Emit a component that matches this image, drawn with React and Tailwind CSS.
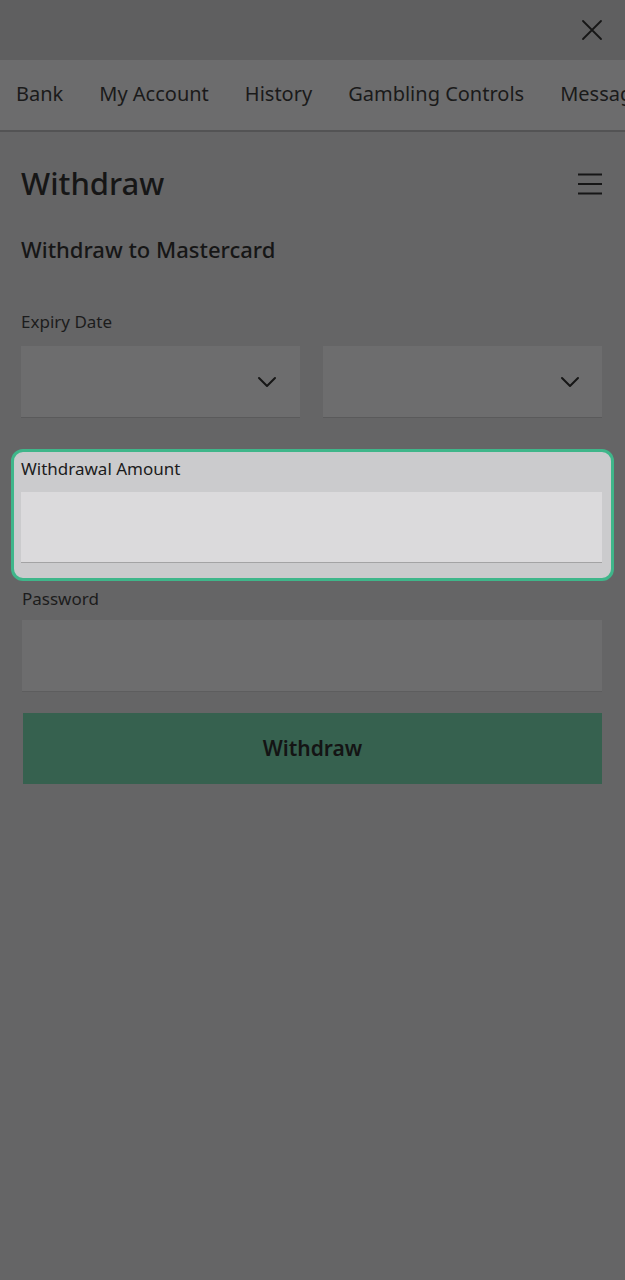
import React from "react";

const font = { fontFamily: "'Noto Sans', Roboto, 'Liberation Sans', sans-serif" };

function Chevron() {
  return (
    <svg width="20" height="12" viewBox="0 0 20 12" fill="none">
      <path d="M2 2 L10 10 L18 2" stroke="#161616" strokeWidth="2" strokeLinecap="round" strokeLinejoin="round" />
    </svg>
  );
}

export default function App() {
  const tabs = ["Bank", "My Account", "History", "Gambling Controls", "Messages"];
  return (
    <div className="w-[625px] h-[1280px] overflow-hidden bg-[#656566] text-[#161616]" style={font}>
      {/* top bar */}
      <div className="h-[60px] bg-[#5f5f60] flex items-center justify-end pr-[22px]">
        <svg width="22" height="22" viewBox="0 0 22 22" fill="none">
          <path d="M2 2 L20 20 M20 2 L2 20" stroke="#161616" strokeWidth="1.8" strokeLinecap="round" />
        </svg>
      </div>
      {/* tabs */}
      <div className="relative h-[72px] bg-[#6c6c6d] border-b-2 border-[#535354] flex items-center gap-[36px] pl-[16px] whitespace-nowrap overflow-hidden">
        {tabs.map((t) => (
          <span key={t} className="text-[20px] leading-none text-[#1a1a1a] shrink-0 -mt-[2px]">{t}</span>
        ))}
        <div className="absolute left-[10px] bottom-[-2px] w-[52px] h-[2px] bg-[#4f6a66]" />
      </div>
      {/* content */}
      <div className="pl-[21px] pr-[23px]">
        <div className="flex items-center justify-between h-[50px] mt-[27px]">
          <h1 className="text-[31px] font-medium leading-none -mt-[2px]">Withdraw</h1>
          <svg width="26" height="22" viewBox="0 0 26 22" fill="none" className="-mr-[1px]">
            <path d="M1 1.5 H25 M1 11 H25 M1 20.5 H25" stroke="#161616" strokeWidth="2" />
          </svg>
        </div>
        <h2 className="mt-[26px] text-[22px] font-medium leading-[28px]">Withdraw to Mastercard</h2>
        <div className="mt-[49px] text-[17px] leading-[20px] text-[#1c1c1c]">Expiry Date</div>
        <div className="mt-[14px] grid grid-cols-2 gap-[23px]">
          <div className="h-[72px] bg-[#6d6d6e] border-b border-[#5a5a5b] flex items-center justify-end pr-[23px]">
            <Chevron />
          </div>
          <div className="h-[72px] bg-[#6d6d6e] border-b border-[#5a5a5b] flex items-center justify-end pr-[22px]">
            <Chevron />
          </div>
        </div>
      </div>
      {/* highlighted field */}
      <div className="mx-[11px] mt-[31px] rounded-[12px] border-[3px] border-[#3fb68a] bg-[#cbcbcd] pl-[7px] pr-[9px] pt-[7px] pb-[15px]">
        <div className="text-[17px] leading-[20px] text-[#1c1c1c]">Withdrawal Amount</div>
        <div className="mt-[13px] h-[71px] bg-[#dbdadc] border-b border-[#a3a3a4]" />
      </div>
      <div className="pl-[22px] pr-[23px]">
        <div className="mt-[8px] text-[17px] leading-[20px] text-[#1c1c1c]">Password</div>
        <div className="mt-[11px] h-[72px] bg-[#6d6d6e] border-b border-[#5d5d5e]" />
        <button className="mt-[21px] ml-[1px] w-[579px] h-[71px] bg-[#36614f] text-[21px] font-semibold text-[#141414] flex items-center justify-center">
          Withdraw
        </button>
      </div>
    </div>
  );
}
